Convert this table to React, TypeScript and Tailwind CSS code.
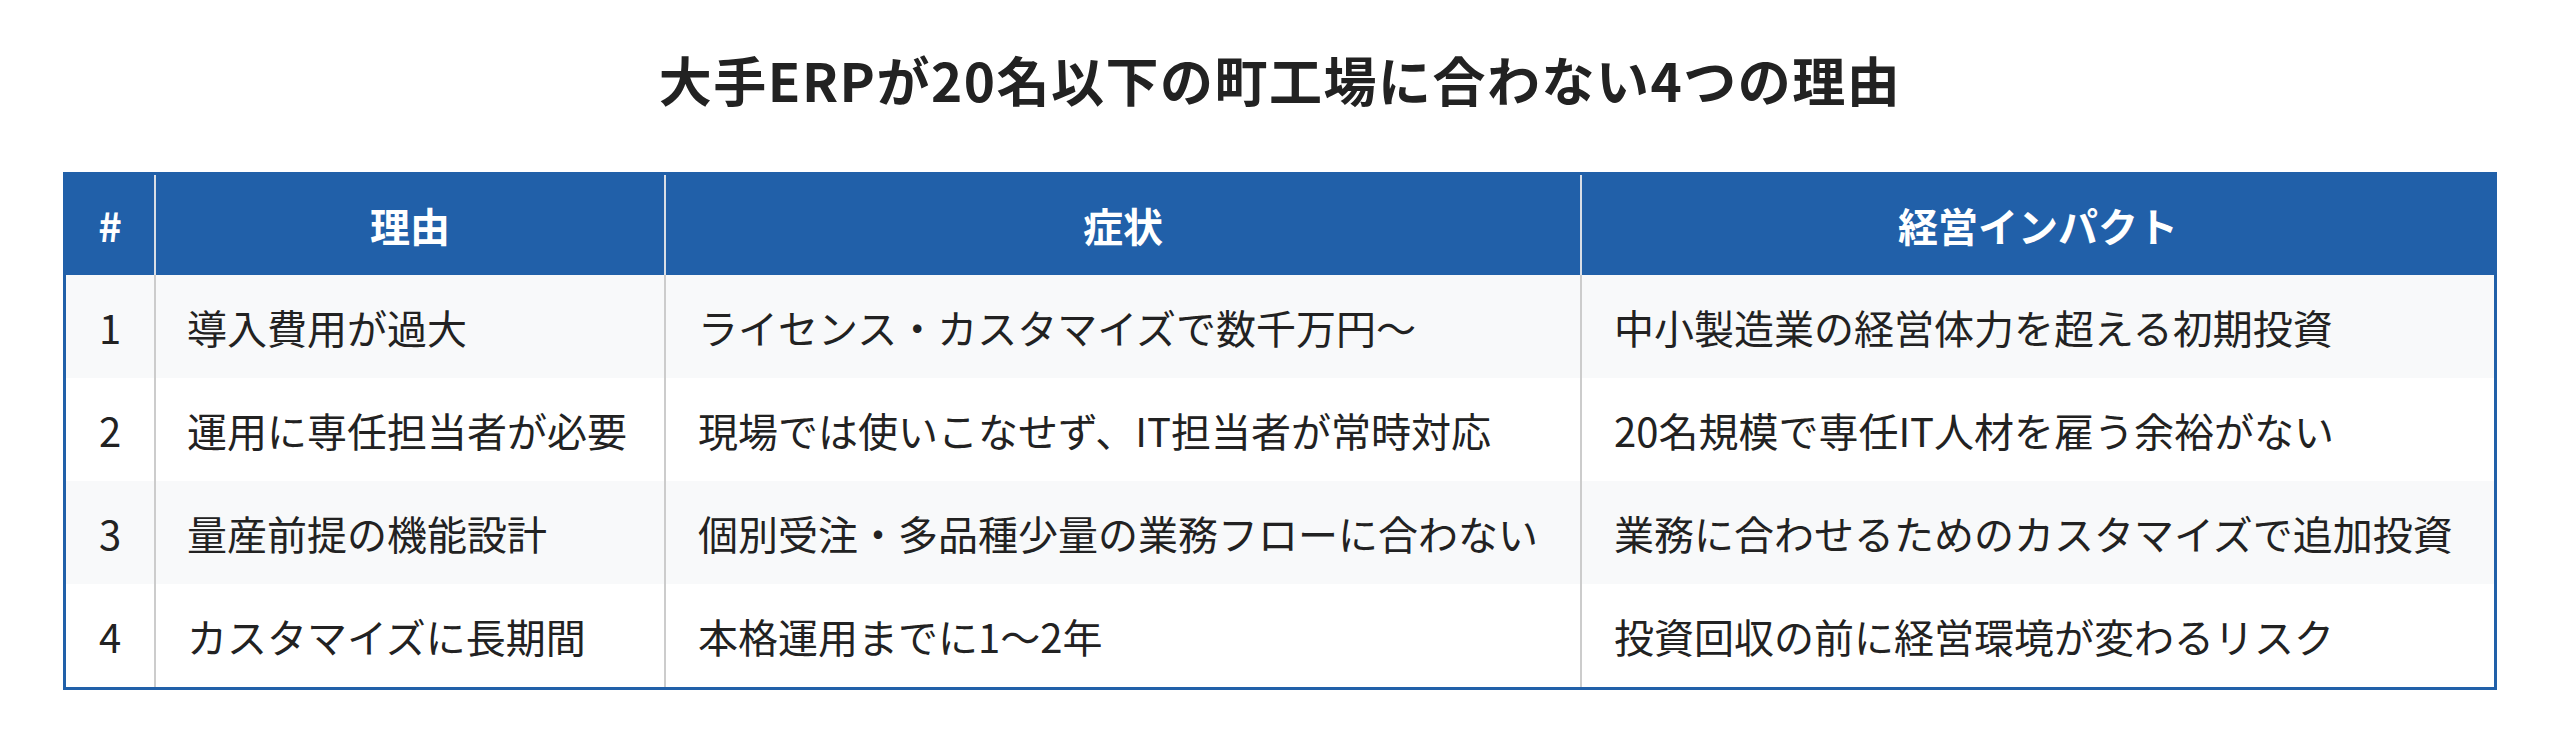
const rows = [
  {
    n: "1",
    reason: "導入費用が過大",
    symptom: "ライセンス・カスタマイズで数千万円〜",
    impact: "中小製造業の経営体力を超える初期投資",
  },
  {
    n: "2",
    reason: "運用に専任担当者が必要",
    symptom: "現場では使いこなせず、IT担当者が常時対応",
    impact: "20名規模で専任IT人材を雇う余裕がない",
  },
  {
    n: "3",
    reason: "量産前提の機能設計",
    symptom: "個別受注・多品種少量の業務フローに合わない",
    impact: "業務に合わせるためのカスタマイズで追加投資",
  },
  {
    n: "4",
    reason: "カスタマイズに長期間",
    symptom: "本格運用までに1〜2年",
    impact: "投資回収の前に経営環境が変わるリスク",
  },
];

const App = () => {
  return (
    <div
      className="min-h-[751px] bg-white text-[#222222]"
      style={{ fontFamily: '"Noto Sans CJK JP", "Noto Sans", sans-serif' }}
    >
      {/* Title */}
      <h1 className="pt-[53px] text-center text-[53px] font-bold leading-none tracking-[1.5px]">
        大手ERPが20名以下の町工場に合わない4つの理由
      </h1>

      {/* Table */}
      <div className="mx-[63px] mt-[66px] border-[3px] border-[#2160a9]">
        <table className="w-full table-fixed border-collapse">
          <colgroup>
            <col className="w-[89px]" />
            <col className="w-[510px]" />
            <col className="w-[916px]" />
            <col />
          </colgroup>
          <thead>
            <tr className="h-[100px] bg-[#2160a9] text-[40px] font-bold text-white">
              <th className="text-center">#</th>
              <th className="border-l-2 border-[#d9dee6] text-center">理由</th>
              <th className="border-l-2 border-[#d9dee6] text-center">症状</th>
              <th className="border-l-2 border-[#d9dee6] text-center">経営インパクト</th>
            </tr>
          </thead>
          <tbody className="text-[40px] font-normal">
            {rows.map((row, i) => (
              <tr
                key={row.n}
                className={
                  i % 2 === 0
                    ? "h-[103px] bg-[#f8f9fa]"
                    : "h-[103px] bg-white"
                }
              >
                <td className="text-center">{row.n}</td>
                <td className="border-l-2 border-[#cccccc] px-[31px] whitespace-nowrap">
                  {row.reason}
                </td>
                <td className="border-l-2 border-[#cccccc] px-[32px] whitespace-nowrap">
                  {row.symptom}
                </td>
                <td className="border-l-2 border-[#cccccc] px-[32px] whitespace-nowrap">
                  {row.impact}
                </td>
              </tr>
            ))}
          </tbody>
        </table>
      </div>
    </div>
  );
};

export default App;
